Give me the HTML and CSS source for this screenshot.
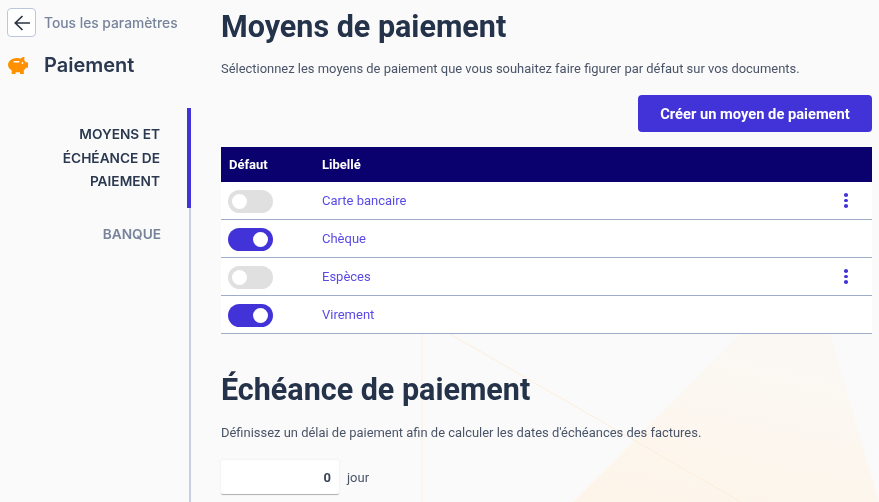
FILE: index.html
```html
<!DOCTYPE html>
<html lang="fr">
<head>
  <meta charset="UTF-8" />
  <title>Paiement</title>
  <link rel="stylesheet" href="styles.css">
</head>
<body>

<svg class="bg-shapes" viewBox="0 0 879 502" aria-hidden="true">
  <defs>
    <linearGradient id="shapeFill" x1="0.2" y1="1" x2="0.6" y2="0">
      <stop offset="0" stop-color="#fdf5ea" />
      <stop offset="1" stop-color="#fbf8f4" />
    </linearGradient>
  </defs>
  <polygon points="573,502 740,334 830,334 879,502" fill="url(#shapeFill)" />
  <line x1="422" y1="334" x2="422" y2="502" stroke="#fdf0dd" stroke-width="1" />
  <line x1="450" y1="334" x2="741" y2="502" stroke="#fdeedb" stroke-width="1" />
</svg>

<div class="page">
  <aside class="sidebar">
    <div class="back-row">
      <button class="back-btn" type="button" aria-label="Retour">
        <svg width="18" height="18" viewBox="0 0 18 18" fill="none" stroke="#2b3440" stroke-width="1.7">
          <path d="M17 9H2.500M9.500 2L2.300 9l7.200 7" />
        </svg>
      </button>
      <span class="back-label">Tous les paramètres</span>
    </div>
    <div class="section-title">
      <svg class="piggy" width="20" height="20" viewBox="0 0 20 20">
        <path fill="#ff9100" d="M9 3c1.500 0 2.700.2 3.700.6C13.600 2.500 15 1.800 16.500 2l-.3 3.200c.7.6 1.200 1.300 1.500 2H20v5.600h-2c-.5 1-1.200 1.800-2.200 2.500V19h-3.800v-1.800H7.500V19H3.700v-3.700C1.400 14 0 12 0 10c0-4 4-7 9-7z" />
        <rect x="5.500" y="6" width="6" height="1.600" rx=".8" fill="#fff" />
        <circle cx="14.500" cy="8" r=".9" fill="#fff" />
      </svg>
      <span>Paiement</span>
    </div>
    <nav class="side-nav">
      <a class="nav-item active">Moyens et échéance de paiement</a>
      <a class="nav-item">Banque</a>
    </nav>
  </aside>

  <main class="content">
    <h1>Moyens de paiement</h1>
    <p class="desc">Sélectionnez les moyens de paiement que vous souhaitez faire figurer par défaut sur vos documents.</p>
    <div class="actions">
      <button class="btn-primary" type="button">Créer un moyen de paiement</button>
    </div>

    <table class="pay-table">
      <thead>
        <tr><th class="col-default">Défaut</th><th>Libellé</th><th class="col-menu"></th></tr>
      </thead>
      <tbody>
        <tr>
          <td><span class="toggle"></span></td>
          <td class="label">Carte bancaire</td>
          <td class="menu"><span class="dots"><i></i><i></i><i></i></span></td>
        </tr>
        <tr>
          <td><span class="toggle on"></span></td>
          <td class="label">Chèque</td>
          <td></td>
        </tr>
        <tr>
          <td><span class="toggle"></span></td>
          <td class="label">Espèces</td>
          <td class="menu"><span class="dots"><i></i><i></i><i></i></span></td>
        </tr>
        <tr>
          <td><span class="toggle on"></span></td>
          <td class="label">Virement</td>
          <td></td>
        </tr>
      </tbody>
    </table>

    <h1 class="second">Échéance de paiement</h1>
    <p class="desc low">Définissez un délai de paiement afin de calculer les dates d'échéances des factures.</p>
    <div class="delay-row">
      <input class="delay-input" type="text" value="0" />
      <span class="unit">jour</span>
    </div>
  </main>
</div>

</body>
</html>
```

FILE: styles.css
```css
body, html {
  margin: 0;
  padding: 0;
  height: 100%;
  background: #fafafa;
  color: #24324a;
  font-family: Roboto, sans-serif;
  overflow: hidden;
}

.bg-shapes {
  position: fixed;
  top: 0;
  left: 0;
  width: 879px;
  height: 502px;
}

.page {
  position: relative;
  display: flex;
  height: 502px;
}

/* colonne de gauche */
.sidebar {
  width: 221px;
  flex: none;
  font-family: Inter, sans-serif;
}

.back-row {
  display: flex;
  align-items: center;
  gap: 8px;
  padding: 8px 0 0 7px;
}

.back-btn {
  width: 29px;
  height: 29px;
  padding: 0;
  display: flex;
  align-items: center;
  justify-content: center;
  background: #fff;
  border: 1px solid #bcc7da;
  border-radius: 4px;
}

.back-label {
  font-size: 13.8px;
  font-weight: 500;
  color: #76839b;
}

.section-title {
  display: flex;
  align-items: center;
  gap: 16px;
  padding: 14px 0 0 8px;
  font-size: 20px;
  font-weight: 600;
  color: #2a3850;
  line-height: 28px;
}

.side-nav {
  width: 191px;
  height: 394px;
  margin-top: 29px;
  box-sizing: border-box;
  border-right: 2px solid #c8d0e2;
}

.nav-item {
  display: block;
  box-sizing: border-box;
  margin-right: -2px;
  padding: 14px 30px 14px 40px;
  font-size: 13.7px;
  font-weight: 600;
  line-height: 24px;
  text-align: right;
  text-transform: uppercase;
  color: #76839b;
}

.nav-item.active {
  height: 100px;
  padding: 15px 27px 0 40px;
  line-height: 23.7px;
  color: #2a3850;
  border-right: 4px solid #4133d8;
}

/* contenu */
.content {
  width: 651px;
}

h1 {
  margin: 0;
  padding-top: 9px;
  font-size: 30.5px;
  font-weight: 700;
  line-height: 36px;
  color: #24324a;
}

h1.second {
  padding-top: 38px;
}

.desc {
  margin: 15px 0 0;
  font-size: 12.94px;
  line-height: 18px;
  color: #4a5468;
}

.desc.low {
  margin-top: 16px;
}

.actions {
  display: flex;
  justify-content: flex-end;
  margin-top: 17px;
}

.btn-primary {
  width: 234px;
  height: 37px;
  border: none;
  border-radius: 4px;
  background: #4133d8;
  color: #fff;
  font-family: Roboto, sans-serif;
  font-size: 14.7px;
  font-weight: 700;
}

.pay-table {
  width: 100%;
  margin-top: 15px;
  border-collapse: collapse;
  background: #fff;
}

.pay-table th {
  height: 35px;
  padding: 0;
  background: #0a006e;
  color: #fff;
  font-size: 13px;
  font-weight: 700;
  text-align: left;
}

.pay-table th.col-default {
  width: 101px;
  padding-left: 8px;
  box-sizing: border-box;
}

.pay-table .col-menu {
  width: 52px;
}

.pay-table td {
  height: 37px;
  padding: 0;
  border-bottom: 1px solid #9fadcb;
  font-size: 13px;
}

.pay-table td:first-child {
  padding-left: 7px;
}

.label {
  color: #5a4ae6;
}

.toggle {
  display: block;
  position: relative;
  width: 45px;
  height: 23px;
  margin-top: 1px;
  border-radius: 12px;
  background: #e0e0e0;
}

.toggle::after {
  content: "";
  position: absolute;
  top: 4px;
  left: 4px;
  width: 15px;
  height: 15px;
  border-radius: 50%;
  background: #fff;
}

.toggle.on {
  background: #4133d8;
}

.toggle.on::after {
  left: 25px;
}

.dots {
  display: flex;
  flex-direction: column;
  gap: 1.8px;
  width: 4px;
  margin-left: 24px;
}

.dots i {
  width: 4px;
  height: 3.6px;
  border-radius: 50%;
  background: #4133d8;
}

.delay-row {
  display: flex;
  align-items: center;
  gap: 8px;
  margin-top: 18px;
}

.delay-input {
  width: 118px;
  height: 35px;
  box-sizing: border-box;
  padding: 0 8px;
  border: none;
  border-bottom: 1px solid #b4b4b4;
  border-radius: 2px;
  box-shadow: 0 0 2px rgba(0, 0, 0, 0.1);
  background: #fff;
  font-family: Roboto, sans-serif;
  font-size: 13px;
  font-weight: 700;
  color: #3a4456;
  text-align: right;
}

.unit {
  font-size: 13px;
  color: #4a5468;
}
```
